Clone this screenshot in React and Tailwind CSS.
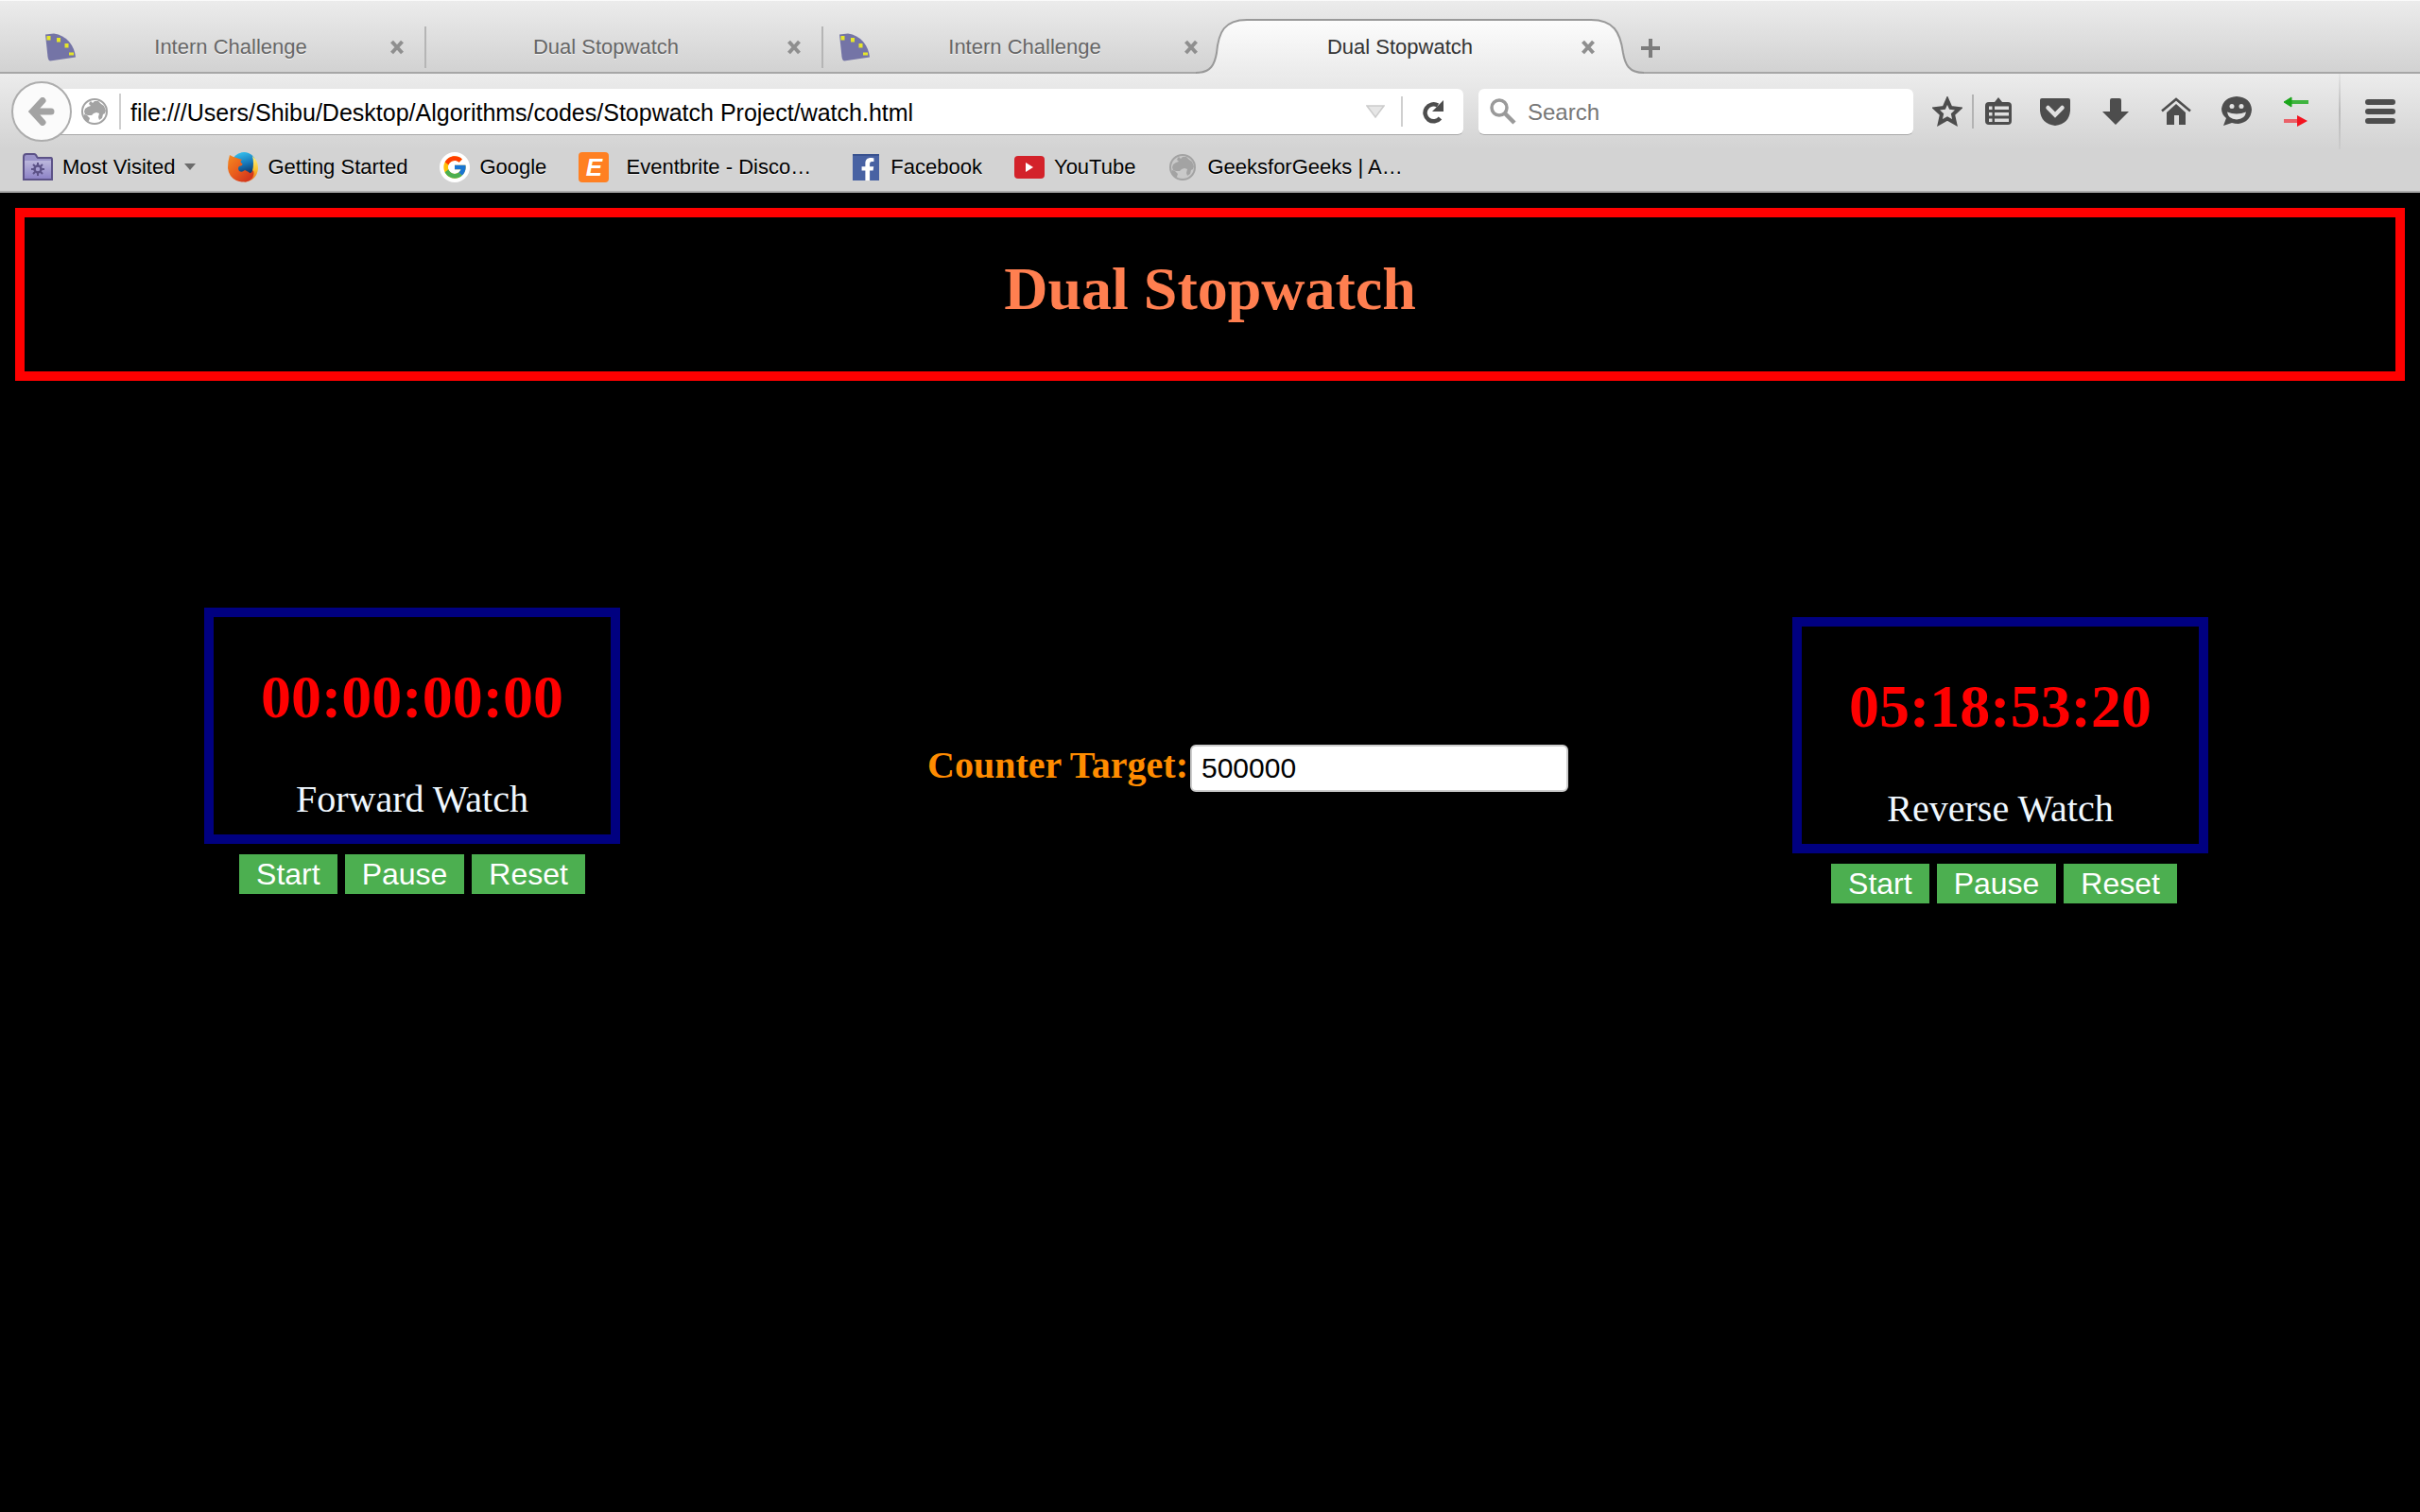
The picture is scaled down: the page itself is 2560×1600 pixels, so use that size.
import React, { useState } from "react";
import { FcGoogle } from "react-icons/fc";
import { FaFacebookF } from "react-icons/fa";

function WedgeIcon() {
  return (
    <svg viewBox="0 0 32 32" className="size-8 shrink-0" aria-hidden="true">
      <path d="M0 2.500L9 1.500Q19 3 25 10Q31 17 32 26.500L5 30.500Q3 30 2.500 26Z" fill="#7474a6" />
      <g fill="#e6e62a">
        <rect x="1.500" y="4" width="4" height="4.500" />
        <rect x="12" y="6" width="4" height="4.500" />
        <rect x="20.500" y="12" width="4" height="4.500" />
        <rect x="25" y="21.500" width="5" height="3" />
      </g>
    </svg>
  );
}

function GlobeIcon({ fill = "none" }) {
  return (
    <svg viewBox="0 0 28 28" className="size-7" aria-hidden="true">
      <circle cx="14" cy="14" r="13" fill={fill} stroke="#a3a3a3" strokeWidth="2" />
      <path
        d="M10 3l2 2 2-2 4 0 3 3 3 2 2 5-1 3-2 1-1 4-3 2-1-3 1-4-3-1-3 1-2 2-4 0-3-1-1-3 1-3 3-2 3-1-2-2 1-2zM3 17l3 1 3 3-1 3-2 0-3-3z"
        fill="#a3a3a3"
      />
    </svg>
  );
}

function CloseIcon() {
  return (
    <svg viewBox="0 0 16 16" className="size-4" aria-hidden="true">
      <path d="M2.500 2L13.500 14M13.500 2L2.500 14" stroke="#8f8f8f" strokeWidth="4" />
    </svg>
  );
}

function FirefoxIcon() {
  return (
    <svg viewBox="0 0 32 32" className="size-8" aria-hidden="true">
      <defs>
        <linearGradient id="ffFlame" x1="0" y1="0" x2="1" y2="1">
          <stop offset="0" stopColor="#f58b1f" />
          <stop offset="0.500" stopColor="#e8591c" />
          <stop offset="1" stopColor="#c9281d" />
        </linearGradient>
        <linearGradient id="ffGlobe" x1="0.300" y1="0" x2="0.600" y2="1">
          <stop offset="0" stopColor="#35c3f0" />
          <stop offset="0.500" stopColor="#1776b8" />
          <stop offset="1" stopColor="#0b2754" />
        </linearGradient>
        <linearGradient id="ffTail" x1="0" y1="0" x2="0" y2="1">
          <stop offset="0" stopColor="#fdf28a" />
          <stop offset="0.500" stopColor="#fcc52e" />
          <stop offset="1" stopColor="#e8591c" />
        </linearGradient>
      </defs>
      <circle cx="17" cy="13" r="13" fill="url(#ffGlobe)" />
      <path d="M26 4Q32 9 32 17Q31 30 17 32Q24 27 26 20Q28 12 26 4Z" fill="url(#ffTail)" />
      <path
        d="M2 3Q5 5 9 6L15 8Q12 10 15 12Q17 14 12 15Q10 17 12 20Q15 22 18 19L22 21Q24 24 27 19Q29 26 23 30Q16 33 9 30Q1 26 0 17Q0 9 2 3Z"
        fill="url(#ffFlame)"
      />
    </svg>
  );
}

function FolderIcon() {
  return (
    <svg viewBox="0 0 32 30" className="h-[30px] w-8" aria-hidden="true">
      <defs>
        <linearGradient id="folderFill" x1="0" y1="0" x2="0" y2="1">
          <stop offset="0" stopColor="#bcb7dc" />
          <stop offset="1" stopColor="#8d83c6" />
        </linearGradient>
      </defs>
      <path d="M1 28V4Q1 1 4 1H12Q14 1 15 4L16 5H30Q31 5 31 7V28Z" fill="#9a93c9" stroke="#5c5287" strokeWidth="2" />
      <rect x="2" y="8" width="28" height="19" fill="url(#folderFill)" />
      <g stroke="#5c5287" fill="none">
        <circle cx="16" cy="17" r="3.500" strokeWidth="2.500" />
        <path
          d="M16 10v3M16 21v3M9 17h3M20 17h3M11 12l2 2M19 20l2 2M21 12l-2 2M13 20l-2 2"
          strokeWidth="2"
        />
      </g>
    </svg>
  );
}

function YoutubeIcon() {
  return (
    <svg viewBox="0 0 32 32" className="size-8" aria-hidden="true">
      <rect y="4" width="32" height="24" rx="4" fill="#d3222a" />
      <path d="M12 11L20 16L12 21Z" fill="#fff" />
    </svg>
  );
}

const toolIcons = [
  {
    label: "Show your bookmarks",
    art: (
      <path
        fillRule="evenodd"
        d="M16 1L20 6H26Q30 6 30 10V26Q30 30 26 30H6Q2 30 2 26V10Q2 6 6 6H12ZM12 10.500H27V14H12ZM12 17H27V20.500H12ZM12 23.500H27V27H12ZM6 10.500H9.500V14H6ZM6 17H9.500V20.500H6ZM6 23.500H9.500V27H6Z"
      />
    ),
  },
  {
    label: "Save to Pocket",
    art: (
      <>
        <path d="M2 2H30Q32 2 32 4V15Q31 29 16 31Q1 29 0 15V4Q0 2 2 2Z" />
        <path d="M8.500 12L16 19.500L23.500 12" fill="none" stroke="#e0e0e0" strokeWidth="4.500" strokeLinecap="round" />
      </>
    ),
  },
  { label: "Downloads", art: <path d="M10 4Q10 2 12 2H20Q22 2 22 4V16H30L16 30L2 16H10Z" /> },
  {
    label: "Home",
    art: (
      <>
        <path d="M16 8L26 17V30H19V20H14V30H6V17Z" />
        <path d="M1 15.500L16 3L31 15.500" fill="none" stroke="#4d4d4d" strokeWidth="2.500" />
      </>
    ),
  },
  {
    label: "Start a conversation",
    art: (
      <>
        <path d="M16 0Q31 1 32 14Q31 27 18 29Q14 29 11 28L2 31L5 23Q0 19 0 13Q2 1 16 0Z" />
        <circle cx="11" cy="10.500" r="2.500" fill="#e2e2e2" />
        <circle cx="21" cy="10.500" r="2.500" fill="#e2e2e2" />
        <path d="M6 16.500Q16 20.500 26 16.500Q25 24 16 24.500Q7 24 6 16.500Z" fill="#e2e2e2" />
      </>
    ),
  },
  {
    label: "Switch direction",
    art: (
      <>
        <path d="M10 6H28" stroke="#3fb43f" strokeWidth="4" />
        <path d="M2 6L10 1V11Z" fill="#1aa51a" stroke="#1aa51a" strokeLinejoin="round" />
        <path d="M2 26H17" stroke="#ea6068" strokeWidth="4" />
        <path d="M16 20V32L27 26Z" fill="#f3131f" />
      </>
    ),
  },
];

const tabs = [
  { title: "Intern Challenge", icon: true },
  { title: "Dual Stopwatch", divided: true },
  { title: "Intern Challenge", icon: true, divided: true },
  { title: "Dual Stopwatch", active: true },
];

function Tab({ title, icon, divided, active }) {
  return (
    <div
      className={`relative flex h-[76px] w-[420px] items-center pt-7 pr-[21px] pb-1 ${icon ? "pl-[19px]" : "pl-[5px]"}`}
    >
      {divided && <span className="absolute top-7 left-0 h-11 w-0.5 bg-[#b5b5b5]" />}
      {active && (
        <svg
          viewBox="0 0 474 59"
          className="absolute -bottom-[3px] -left-6 h-[59px] w-[474px] max-w-none"
          aria-hidden="true"
        >
          <defs>
            <linearGradient id="tabFill" x1="0" y1="0" x2="0" y2="1">
              <stop offset="0" stopColor="#fcfcfc" />
              <stop offset="1" stopColor="#ebebeb" />
            </linearGradient>
          </defs>
          <path
            d="M0 57C16 57 20 48 22 36C24 14 30 1 54 1H418C442 1 449 14 452 36C454 48 458 57 474 57V59H0Z"
            fill="url(#tabFill)"
          />
          <path
            d="M0 57C16 57 20 48 22 36C24 14 30 1 54 1H418C442 1 449 14 452 36C454 48 458 57 474 57"
            fill="none"
            stroke="#999999"
            strokeWidth="2"
          />
        </svg>
      )}
      {icon && <WedgeIcon />}
      <button
        type="button"
        role="tab"
        aria-selected={!!active}
        className={`relative flex-1 text-center text-[22px] leading-7 [text-shadow:0_1px_0_#f2f2f2] ${active ? "text-[#333333]" : "text-[#666666]"}`}
      >
        {title}
      </button>
      <button type="button" aria-label={`Close ${title}`} className="relative ml-1">
        <CloseIcon />
      </button>
    </div>
  );
}

function Bookmark({ label, icon, fixed, menu }) {
  return (
    <a href="#" className="flex items-center gap-[10px]">
      <span className="flex size-8 items-center justify-center">{icon}</span>
      <span className={fixed ? "w-[212px] text-center" : ""}>{label}</span>
      {menu && (
        <svg viewBox="0 0 12 8" className="h-2 w-3" aria-hidden="true">
          <path d="M0 0H12L6 7Z" fill="#6b6b6b" />
        </svg>
      )}
    </a>
  );
}

function Chrome() {
  const [url, setUrl] = useState("file:///Users/Shibu/Desktop/Algorithms/codes/Stopwatch Project/watch.html");
  return (
    <header className="border-b-2 border-[#a9a9a9] bg-[#d3d3d3] font-['Liberation_Sans',Arial,sans-serif] text-black">
      <div
        role="tablist"
        className="flex border-b-2 border-[#a6a6a6] bg-linear-to-b from-[#ececec] to-[#d2d2d2] pl-[29px] shadow-[inset_0_1px_0_#fafafa]"
      >
        {tabs.map((tab, i) => (
          <Tab key={i} {...tab} />
        ))}
        <button type="button" aria-label="Open a new tab" className="ml-[26px] self-start pt-[26px]">
          <svg viewBox="0 0 22 50" className="h-[50px] w-[22px]" aria-hidden="true">
            <path d="M11 15V35M1 25H21" stroke="#7c7c7c" strokeWidth="4" />
          </svg>
        </button>
      </div>

      <div className="flex h-20 items-center bg-linear-to-b from-[#ececec] to-[#d3d3d3] pl-3">
        <button
          type="button"
          aria-label="Back"
          className="z-10 flex size-16 shrink-0 items-center justify-center rounded-full border-2 border-[#adadad] bg-[#fbfbfb]"
        >
          <svg viewBox="0 0 28 30" className="h-[30px] w-7" aria-hidden="true">
            <path
              d="M15 3.500L4.500 15L15 26.500M6 15H24"
              fill="none"
              stroke="#a3a3a3"
              strokeWidth="7"
              strokeLinecap="round"
            />
          </svg>
        </button>
        <div className="-ml-4 flex h-[49px] flex-1 items-center rounded-r-md border-b border-[#a8a8a8] bg-white pl-[26px]">
          <GlobeIcon />
          <span className="mr-[10px] ml-3 h-[38px] w-0.5 bg-[#cfcfcf]" />
          <input
            aria-label="Address"
            value={url}
            onChange={(e) => setUrl(e.target.value)}
            className="min-w-0 flex-1 pt-0.5 text-[25px] leading-8 outline-none"
          />
          <svg viewBox="0 0 20 14" className="h-[14px] w-5" aria-hidden="true">
            <path d="M1 1H19L10 13Z" fill="#e6e6e6" stroke="#cccccc" strokeWidth="1.500" />
          </svg>
          <span className="ml-[17px] h-8 w-0.5 bg-[#cfcfcf]" />
          <button type="button" aria-label="Reload" className="mx-5">
            <svg viewBox="0 0 24 26" className="h-[26px] w-6" aria-hidden="true">
              <path d="M19.500 20A9 9 0 1 1 17 6.500" fill="none" stroke="#4d4d4d" strokeWidth="4.500" />
              <path d="M23 1V13H11Z" fill="#4d4d4d" />
            </svg>
          </button>
        </div>
        <label className="ml-4 flex h-[49px] w-[460px] shrink items-center gap-3 rounded-md border-b border-[#a8a8a8] bg-white pl-3">
          <svg viewBox="0 0 28 28" className="size-7 shrink-0" aria-label="Search" role="img">
            <circle cx="10" cy="10" r="8" fill="none" stroke="#9a9a9a" strokeWidth="3.500" />
            <path d="M15.500 15.500L26 26" stroke="#9a9a9a" strokeWidth="4.500" />
          </svg>
          <input
            placeholder="Search"
            className="min-w-0 flex-1 pt-0.5 text-[24px] leading-8 outline-none placeholder:text-[#777777]"
          />
        </label>
        <div className="flex items-center pl-5">
          <button type="button" aria-label="Bookmark this page">
            <svg viewBox="0 0 32 32" className="size-8" aria-hidden="true">
              <path
                d="M16 4L19.500 12L28.500 13L22 19L24 28L16 23.500L8 28L10 19L3.500 13L12.500 12Z"
                fill="none"
                stroke="#4d4d4d"
                strokeWidth="4"
              />
            </svg>
          </button>
          <span className="mx-[10px] h-9 w-0.5 bg-[#b3b3b3]" />
          <div className="flex gap-8">
            {toolIcons.map((tool) => (
              <button key={tool.label} type="button" aria-label={tool.label} className="first:-mr-1">
                <svg viewBox="0 0 32 32" className="size-8" fill="#4d4d4d" aria-hidden="true">
                  {tool.art}
                </svg>
              </button>
            ))}
          </div>
        </div>
        <span className="ml-7 h-full w-0.5 bg-linear-to-b from-[#e4e4e4] via-[#bcbcbc] to-[#cccccc]" />
        <button type="button" aria-label="Open menu" className="mx-[26px]">
          <svg viewBox="0 0 32 26" className="h-[26px] w-8" aria-hidden="true">
            <path d="M3 3H29M3 13H29M3 23H29" stroke="#4d4d4d" strokeWidth="6" strokeLinecap="round" />
          </svg>
        </button>
      </div>

      <nav
        aria-label="Bookmarks"
        className="flex h-11 items-center gap-[34px] pb-[6px] pl-6 text-[22px] leading-7 whitespace-nowrap [text-shadow:0_1px_0_#f0f0f0]"
      >
        <Bookmark label="Most Visited" icon={<FolderIcon />} menu />
        <Bookmark label="Getting Started" icon={<FirefoxIcon />} />
        <Bookmark
          label="Google"
          icon={
            <span className="flex size-8 items-center justify-center rounded-full bg-white">
              <FcGoogle className="size-7" />
            </span>
          }
        />
        <Bookmark
          label="Eventbrite - Disco…"
          fixed
          icon={
            <span className="flex size-8 items-center justify-center rounded bg-[#ff8022] text-[26px] leading-8 font-bold text-white italic [text-shadow:none]">
              E
            </span>
          }
        />
        <Bookmark
          label="Facebook"
          icon={
            <span className="flex size-7 items-end justify-end bg-[#4862a3] pr-1 shadow-[inset_0_2px_0_#39528f]">
              <FaFacebookF className="h-6 w-4 text-white" />
            </span>
          }
        />
        <Bookmark label="YouTube" icon={<YoutubeIcon />} />
        <Bookmark label="GeeksforGeeks | A…" icon={<GlobeIcon fill="#c9c9c9" />} />
      </nav>
    </header>
  );
}

function Watch({ time, name, className = "", controlsClass = "" }) {
  return (
    <section className={`flex flex-col items-center ${className}`}>
      <div className="w-[440px] border-10 border-[#000080] pt-12 pb-[14px] text-center">
        <h1 className="text-[64px] leading-[74px] font-bold text-[#ff0000]">{time}</h1>
        <p className="mt-12 text-[40px] leading-[46px] text-[#f0f8ff]">{name}</p>
      </div>
      <div
        className={`mt-[11px] flex gap-2 font-['Liberation_Sans',Arial,sans-serif] text-[32px] leading-[42px] text-white ${controlsClass}`}
      >
        {["Start", "Pause", "Reset"].map((action) => (
          <button key={action} type="button" className="bg-[#4caf50] px-[18px]">
            {action}
          </button>
        ))}
      </div>
    </section>
  );
}

export default function App() {
  const [target, setTarget] = useState("500000");
  return (
    <div className="min-h-screen bg-black font-['Liberation_Serif','Times_New_Roman',serif]">
      <Chrome />
      <main className="pt-4">
        <div className="mx-4 border-10 border-[#ff0000] pt-[39px] pb-[50px] text-center">
          <h1 className="text-[64px] leading-[74px] font-bold text-[#ff7f50]">Dual Stopwatch</h1>
        </div>
        <div className="mt-[240px] grid grid-cols-[109fr_112fr_87fr] items-start pr-24">
          <Watch time="00:00:00:00" name="Forward Watch" />
          <div className="mt-36 flex items-baseline justify-center gap-0.5">
            <label htmlFor="target" className="text-[40px] leading-[46px] font-bold text-[#ff8c00]">
              Counter Target:
            </label>
            <input
              id="target"
              value={target}
              onChange={(e) => setTarget(e.target.value)}
              className="h-[50px] w-[400px] rounded-md border-2 border-[#cccccc] bg-white px-[10px] font-['Liberation_Sans',Arial,sans-serif] text-[30px] leading-[46px] text-black"
            />
          </div>
          <Watch time="05:18:53:20" name="Reverse Watch" className="mt-[10px]" controlsClass="pl-2" />
        </div>
      </main>
    </div>
  );
}
